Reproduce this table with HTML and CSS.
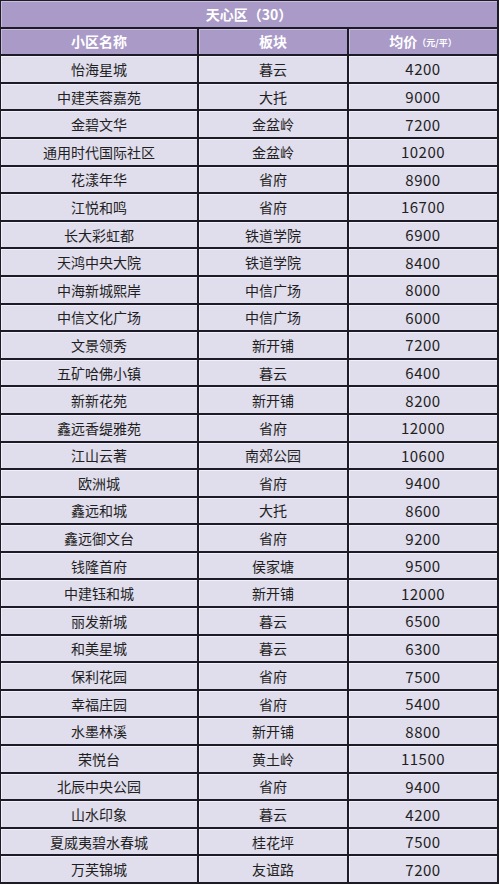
FILE: index.html
```html
<!DOCTYPE html>
<html lang="zh">
<head>
<meta charset="utf-8">
<title>天心区</title>
<link rel="stylesheet" href="styles.css">
</head>
<body>
<div class="sheet">
  <div class="cell title">天心区（30）</div>
  <div class="cell head">小区名称</div>
  <div class="cell head">板块</div>
  <div class="cell head">均价<span class="unit">（元/平）</span></div>

  <div class="cell">怡海星城</div><div class="cell">暮云</div><div class="cell num">4200</div>
  <div class="cell">中建芙蓉嘉苑</div><div class="cell">大托</div><div class="cell num">9000</div>
  <div class="cell">金碧文华</div><div class="cell">金盆岭</div><div class="cell num">7200</div>
  <div class="cell">通用时代国际社区</div><div class="cell">金盆岭</div><div class="cell num">10200</div>
  <div class="cell">花漾年华</div><div class="cell">省府</div><div class="cell num">8900</div>
  <div class="cell">江悦和鸣</div><div class="cell">省府</div><div class="cell num">16700</div>
  <div class="cell">长大彩虹都</div><div class="cell">铁道学院</div><div class="cell num">6900</div>
  <div class="cell">天鸿中央大院</div><div class="cell">铁道学院</div><div class="cell num">8400</div>
  <div class="cell">中海新城熙岸</div><div class="cell">中信广场</div><div class="cell num">8000</div>
  <div class="cell">中信文化广场</div><div class="cell">中信广场</div><div class="cell num">6000</div>
  <div class="cell">文景领秀</div><div class="cell">新开铺</div><div class="cell num">7200</div>
  <div class="cell">五矿哈佛小镇</div><div class="cell">暮云</div><div class="cell num">6400</div>
  <div class="cell">新新花苑</div><div class="cell">新开铺</div><div class="cell num">8200</div>
  <div class="cell">鑫远香缇雅苑</div><div class="cell">省府</div><div class="cell num">12000</div>
  <div class="cell">江山云著</div><div class="cell">南郊公园</div><div class="cell num">10600</div>
  <div class="cell">欧洲城</div><div class="cell">省府</div><div class="cell num">9400</div>
  <div class="cell">鑫远和城</div><div class="cell">大托</div><div class="cell num">8600</div>
  <div class="cell">鑫远御文台</div><div class="cell">省府</div><div class="cell num">9200</div>
  <div class="cell">钱隆首府</div><div class="cell">侯家塘</div><div class="cell num">9500</div>
  <div class="cell">中建钰和城</div><div class="cell">新开铺</div><div class="cell num">12000</div>
  <div class="cell">丽发新城</div><div class="cell">暮云</div><div class="cell num">6500</div>
  <div class="cell">和美星城</div><div class="cell">暮云</div><div class="cell num">6300</div>
  <div class="cell">保利花园</div><div class="cell">省府</div><div class="cell num">7500</div>
  <div class="cell">幸福庄园</div><div class="cell">省府</div><div class="cell num">5400</div>
  <div class="cell">水墨林溪</div><div class="cell">新开铺</div><div class="cell num">8800</div>
  <div class="cell">荣悦台</div><div class="cell">黄土岭</div><div class="cell num">11500</div>
  <div class="cell">北辰中央公园</div><div class="cell">省府</div><div class="cell num">9400</div>
  <div class="cell">山水印象</div><div class="cell">暮云</div><div class="cell num">4200</div>
  <div class="cell">夏威夷碧水春城</div><div class="cell">桂花坪</div><div class="cell num">7500</div>
  <div class="cell">万芙锦城</div><div class="cell">友谊路</div><div class="cell num">7200</div>
</div>
</body>
</html>
```

FILE: styles.css
```css
html, body {
  margin: 0;
  padding: 0;
  background: #ffffff;
}

.sheet {
  width: 499px;
  box-sizing: border-box;
  padding: 1px 2px 2px 1px;
  background: #1d1b27;
  display: grid;
  grid-template-columns: 196px 148px 148px;
  grid-auto-rows: 25.6px;
  gap: 2px;
  font-family: "Noto Sans CJK SC", "Noto Sans", sans-serif;
}

.cell {
  background: #e0ddec;
  color: #1f1f1f;
  font-size: 14px;
  display: flex;
  align-items: center;
  justify-content: center;
  white-space: nowrap;
  box-shadow: inset 1px 1px 0 rgba(255, 255, 255, 0.55);
}

.num {
  font-size: 15px;
  letter-spacing: 0.5px;
}

.title,
.head {
  background: #aa9ac7;
  color: #ffffff;
  font-weight: bold;
  box-shadow: inset 1px 1px 0 rgba(255, 255, 255, 0.35);
}

.title {
  grid-column: 1 / -1;
  font-size: 14px;
}

.unit {
  font-size: 9px;
  font-weight: bold;
  margin-top: 3px;
}
```
